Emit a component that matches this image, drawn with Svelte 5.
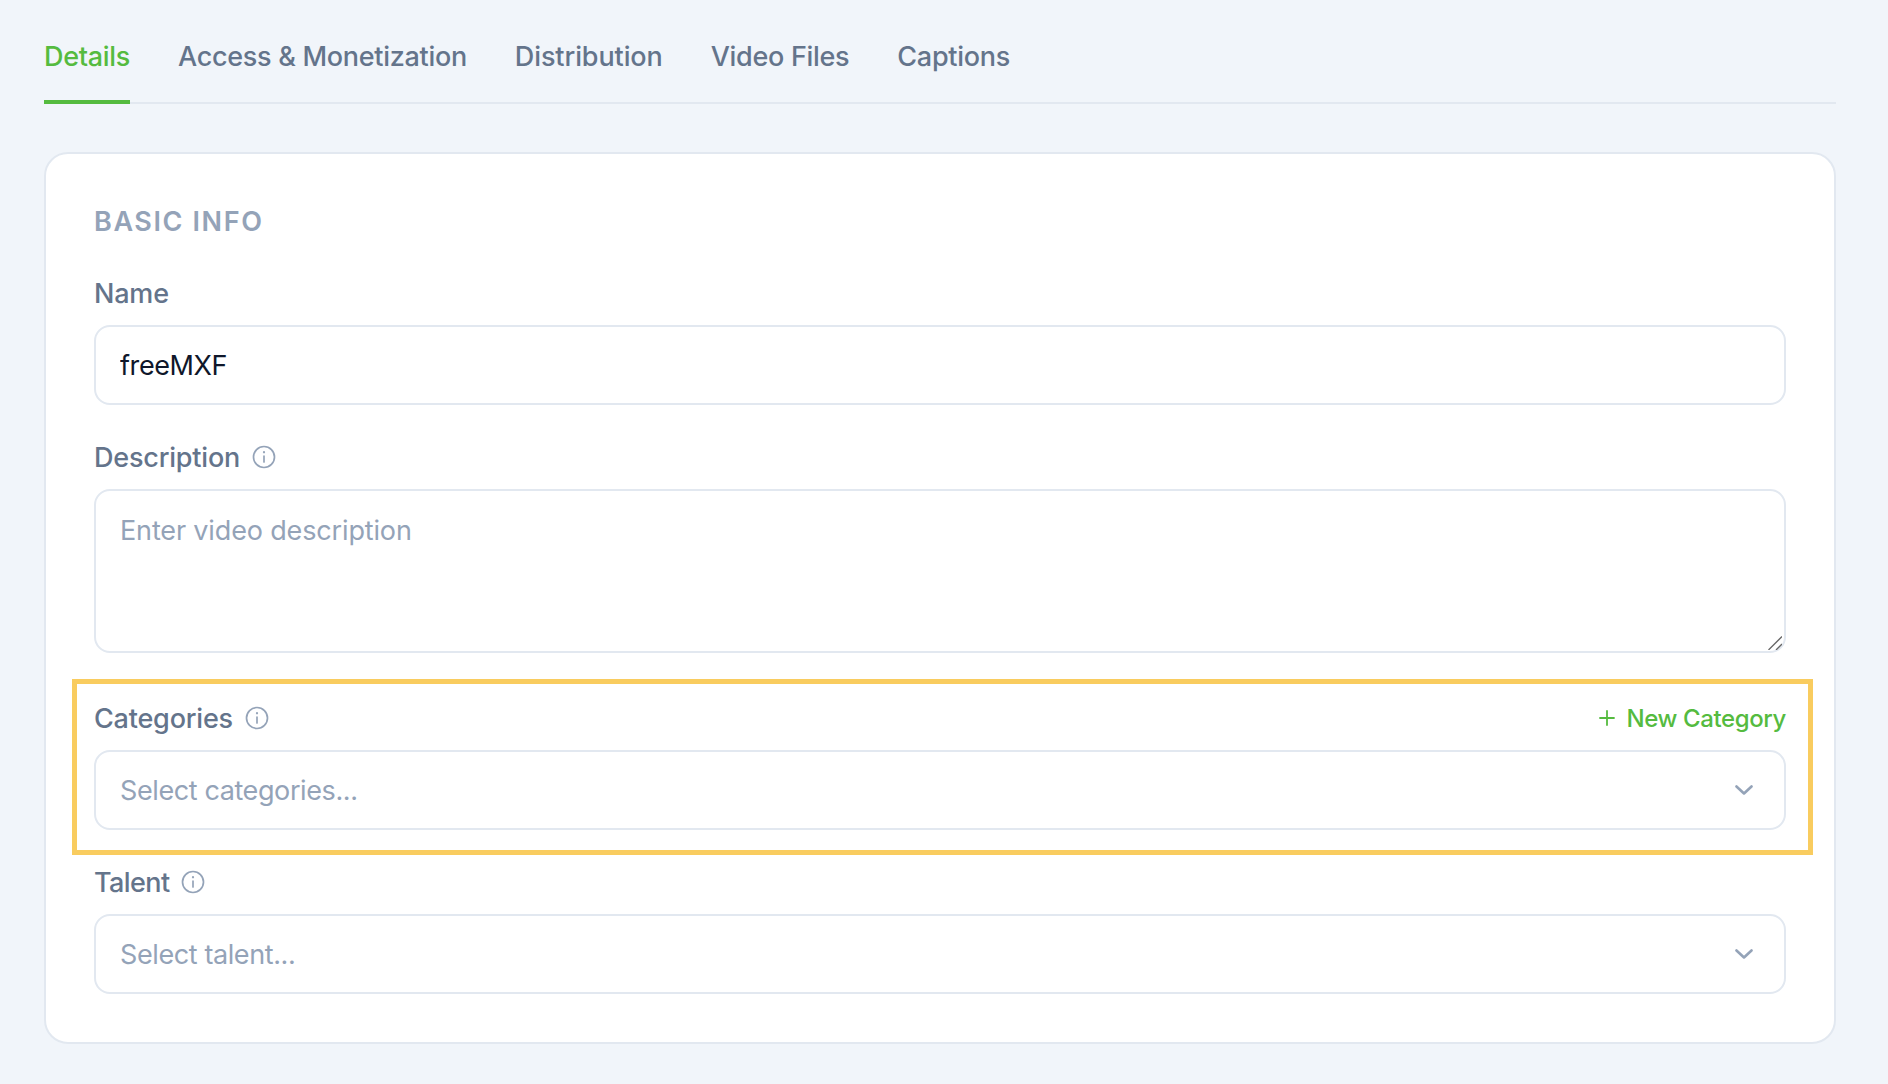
<script>
    const tabs = ['Details', 'Access & Monetization', 'Distribution', 'Video Files', 'Captions'];
    let active = $state('Details');
</script>

{#snippet info()}
    <svg class="info" viewBox="0 0 24 24" fill="none" stroke="currentColor" stroke-width="1.7" stroke-linecap="round">
        <circle cx="12" cy="12" r="10.5" />
        <path d="M12 11v6" />
        <path d="M12 7.2v.1" stroke-width="2.2" />
    </svg>
{/snippet}

{#snippet chevron()}
    <svg class="chevron" viewBox="0 0 18 10" fill="none" stroke="currentColor" stroke-width="2.6" stroke-linecap="round" stroke-linejoin="round">
        <path d="M1.5 1.5L9 8.5l7.5-7" />
    </svg>
{/snippet}

<div class="page">
    <nav class="tabs">
        {#each tabs as tab}
            <button class="tab" class:active={active === tab} onclick={() => (active = tab)}>{tab}</button>
        {/each}
    </nav>

    <section class="card">
        <h2 class="title">BASIC INFO</h2>

        <div class="field">
            <div class="label-row"><label for="name">Name</label></div>
            <input id="name" class="input" type="text" value="freeMXF" />
        </div>

        <div class="field">
            <div class="label-row"><label for="desc">Description</label>{@render info()}</div>
            <div class="area-wrap">
                <textarea id="desc" class="input area" placeholder="Enter video description"></textarea>
                <svg class="grip" viewBox="0 0 14 14" fill="none" stroke="#666" stroke-width="1.3">
                    <path d="M0.5 14L14 0.5M8 14l6-6" />
                </svg>
            </div>
        </div>

        <div class="field highlighted">
            <div class="highlight"></div>
            <div class="label-row">
                <span class="label">Categories</span>{@render info()}
                <button class="new">
                    <svg viewBox="0 0 18 18" fill="none" stroke="currentColor" stroke-width="1.8" stroke-linecap="round"><path d="M9 2v14M2 9h14" /></svg>
                    New Category
                </button>
            </div>
            <div class="input select">Select categories...{@render chevron()}</div>
        </div>

        <div class="field">
            <div class="label-row"><span class="label talent">Talent</span>{@render info()}</div>
            <div class="input select">Select talent...{@render chevron()}</div>
        </div>
    </section>
</div>

<style>
    :global(body) {
        background: #f1f5fa;
    }
    .page {
        width: 1792px;
        height: 1084px;
        margin-left: 44px;
        font-family: Inter, "Liberation Sans", sans-serif;
    }
    .tabs {
        display: flex;
        gap: 48px;
        height: 104px;
        border-bottom: 2px solid #e2e8f0;
        box-sizing: border-box;
    }
    .tab {
        box-sizing: border-box;
        height: 104px;
        padding: 12px 0 0;
        border: 0;
        border-bottom: 4px solid transparent;
        background: none;
        font: 500 27px Inter, sans-serif;
        letter-spacing: -0.3px;
        color: #64748b;
    }
    .tab:nth-child(3) {
        letter-spacing: -0.1px;
    }
    .tab.active {
        color: #55bb3f;
        border-bottom-color: #55bb3f;
    }
    .card {
        margin-top: 48px;
        box-sizing: border-box;
        height: 892px;
        padding: 49px 48px 47px;
        background: #fff;
        border: 2px solid #e2e8f0;
        border-radius: 24px;
    }
    .title {
        margin: 0 0 32px;
        font-size: 27px;
        line-height: 38px;
        font-weight: 600;
        letter-spacing: 1.6px;
        color: #94a3b8;
    }
    .field {
        position: relative;
        margin-bottom: 32px;
    }
    .field:last-child {
        margin-bottom: 0;
    }
    .field:has(.area) {
        margin-bottom: 45px;
    }
    .highlight {
        position: absolute;
        left: -22px;
        right: -27px;
        top: -19px;
        bottom: -25px;
        border: 5px solid #f9cc5f;
        pointer-events: none;
    }
    .label-row {
        display: flex;
        align-items: center;
        gap: 12px;
        height: 40px;
        margin-bottom: 12px;
    }
    label,
    .label {
        font-size: 27px;
        font-weight: 500;
        letter-spacing: -0.2px;
        color: #64748b;
    }
    .talent {
        letter-spacing: -0.6px;
    }
    .info {
        width: 24px;
        height: 24px;
        color: #94a3b8;
    }
    .new {
        display: flex;
        align-items: center;
        gap: 11px;
        margin-left: auto;
        padding: 0;
        border: 0;
        background: none;
        font: 500 24px Inter, sans-serif;
        letter-spacing: -0.4px;
        color: #55bb3f;
    }
    .new svg {
        width: 18px;
        height: 18px;
    }
    .input {
        display: block;
        box-sizing: border-box;
        width: 100%;
        height: 80px;
        padding: 0 24px;
        border: 2px solid #e2e8f0;
        border-radius: 16px;
        background: #fff;
        font: 400 27px Inter, sans-serif;
        letter-spacing: -0.4px;
        color: #0f172a;
        outline: none;
    }
    .area-wrap {
        position: relative;
        height: 164px;
    }
    .area {
        height: 164px;
        padding-top: 22px;
        line-height: 36px;
        letter-spacing: -0.15px;
        resize: none;
    }
    .area::placeholder {
        color: #94a3b8;
        opacity: 1;
    }
    .grip {
        position: absolute;
        right: 4px;
        bottom: 3px;
        width: 14px;
        height: 14px;
        pointer-events: none;
    }
    .select {
        display: flex;
        align-items: center;
        justify-content: space-between;
        padding-right: 31px;
        color: #94a3b8;
    }
    .chevron {
        width: 18px;
        height: 10px;
        color: #94a3b8;
    }
</style>
